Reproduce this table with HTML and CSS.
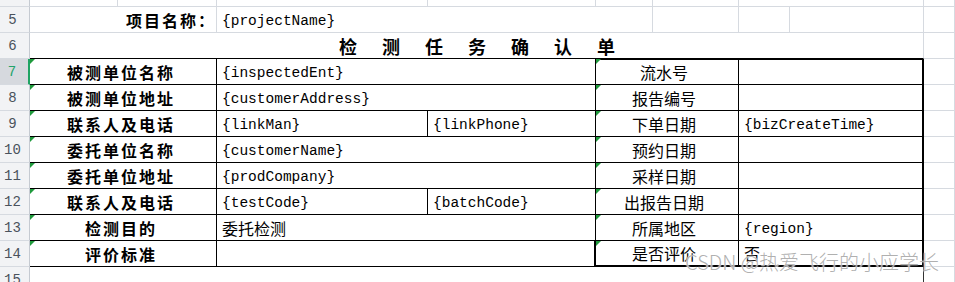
FILE: index.html
```html
<!DOCTYPE html>
<html lang="zh">
<head>
<meta charset="utf-8">
<title>检测任务确认单</title>
<link rel="stylesheet" href="styles.css">
</head>
<body>
<div class="sheet">
  <!-- row 4 -->
  <div class="hd">4</div>
  <div class="c"></div><div class="c"></div><div class="c"></div><div class="c"></div><div class="c"></div><div class="c"></div>
  <div class="c s2"></div><div class="c"></div>
  <!-- row 5 -->
  <div class="hd">5</div>
  <div class="c s2 lb right">项目名称：</div>
  <div class="c s3 v">{projectName}</div>
  <div class="c"></div><div class="c"></div><div class="c"></div><div class="c"></div>
  <!-- row 6 -->
  <div class="hd">6</div>
  <div class="c s8 title">检测任务确认单</div>
  <div class="c"></div>
  <!-- row 7 -->
  <div class="hd sel">7</div>
  <div class="c s2 t lb w">被测单位名称</div>
  <div class="c s2 t v">{inspectedEnt}</div>
  <div class="c s2 t rl w top">流水号</div>
  <div class="c s2 t v rt top"></div>
  <div class="c"></div>
  <!-- row 8 -->
  <div class="hd">8</div>
  <div class="c s2 t lb w">被测单位地址</div>
  <div class="c s2 t v">{customerAddress}</div>
  <div class="c s2 t rl w">报告编号</div>
  <div class="c s2 t v rt"></div>
  <div class="c"></div>
  <!-- row 9 -->
  <div class="hd">9</div>
  <div class="c s2 t lb w">联系人及电话</div>
  <div class="c t v">{linkMan}</div>
  <div class="c t v">{linkPhone}</div>
  <div class="c s2 t rl w">下单日期</div>
  <div class="c s2 t v rt">{bizCreateTime}</div>
  <div class="c"></div>
  <!-- row 10 -->
  <div class="hd">10</div>
  <div class="c s2 t lb w">委托单位名称</div>
  <div class="c s2 t v">{customerName}</div>
  <div class="c s2 t rl w">预约日期</div>
  <div class="c s2 t v rt"></div>
  <div class="c"></div>
  <!-- row 11 -->
  <div class="hd">11</div>
  <div class="c s2 t lb w">委托单位地址</div>
  <div class="c s2 t v">{prodCompany}</div>
  <div class="c s2 t rl w">采样日期</div>
  <div class="c s2 t v rt"></div>
  <div class="c"></div>
  <!-- row 12 -->
  <div class="hd">12</div>
  <div class="c s2 t lb w">联系人及电话</div>
  <div class="c t v">{testCode}</div>
  <div class="c t v">{batchCode}</div>
  <div class="c s2 t rl w">出报告日期</div>
  <div class="c s2 t v rt"></div>
  <div class="c"></div>
  <!-- row 13 -->
  <div class="hd">13</div>
  <div class="c s2 t lb w">检测目的</div>
  <div class="c s2 t vc">委托检测</div>
  <div class="c s2 t rl w">所属地区</div>
  <div class="c s2 t v rt">{region}</div>
  <div class="c"></div>
  <!-- row 14 -->
  <div class="hd">14</div>
  <div class="c s2 t lb w">评价标准</div>
  <div class="c s2 t vc thickr"></div>
  <div class="c s2 t rl w bot">是否评价</div>
  <div class="c s2 t vc rt bot">否</div>
  <div class="c"></div>
  <!-- row 15 -->
  <div class="hd">15</div>
  <div class="c s8 last"></div>
  <div class="c"></div>
</div>
<div class="watermark">CSDN @热爱飞行的小应学长</div>
</body>
</html>
```

FILE: styles.css
```css
html, body {
  margin: 0;
  padding: 0;
  background: #ffffff;
}

body {
  position: relative;
  width: 955px;
  height: 282px;
  overflow: hidden;
  font-family: "Noto Sans CJK SC", "Noto Sans", sans-serif;
  color: #000;
}

.sheet {
  display: grid;
  grid-template-columns: 30px 88px 99px 211px 168px 57px 86px 51px 134px 31px;
  grid-auto-rows: 26px;
  margin-top: -19px;
}

.hd {
  box-sizing: border-box;
  background: #f2f3f5;
  border-right: 1px solid #c5cad1;
  border-bottom: 1px solid #d6dae0;
  color: #4a525c;
  font-family: "Liberation Mono", monospace;
  font-size: 14px;
  display: flex;
  align-items: center;
  justify-content: center;
  padding-right: 4px;
}

.hd.sel {
  background: #d6d9de;
  color: #22a36a;
  border-right: 2px solid #1fa463;
}

.c {
  box-sizing: border-box;
  position: relative;
  border-right: 1px solid #d6dae0;
  border-bottom: 1px solid #d6dae0;
  display: flex;
  align-items: center;
  white-space: nowrap;
  overflow: visible;
}

.s2 { grid-column: span 2; }
.s3 { grid-column: span 3; }
.s8 { grid-column: span 8; }

.t {
  border-right-color: #000;
  border-bottom-color: #000;
}

.title {
  border-bottom-color: #000;
  justify-content: center;
  align-items: flex-end;
  padding-bottom: 1px;
  padding-left: 26px;
  font-size: 18px;
  font-weight: 700;
  letter-spacing: 25px;
  line-height: 22px;
}

.lb {
  justify-content: center;
  font-size: 16px;
  font-weight: 700;
  letter-spacing: 2px;
  padding-right: 4px;
}

.lb.right {
  justify-content: flex-end;
  padding-right: 0;
  letter-spacing: 2px;
}

.rl {
  justify-content: center;
  font-size: 16px;
  padding-right: 6px;
}

.v {
  font-family: "Liberation Mono", monospace;
  font-size: 14.5px;
  padding-left: 5px;
  padding-top: 2px;
}

.vc {
  font-size: 16px;
  padding-left: 5px;
}

.rt {
  border-right: 2px solid #000;
}

.top {
  box-shadow: inset 0 1px 0 #000;
}

.bot {
  border-bottom: 2px solid #000;
}

.thickr {
  border-right: 2px solid #000;
}

.last {
  border-bottom-color: transparent;
  border-right-color: #333;
}

.w::before {
  content: "";
  position: absolute;
  top: 0;
  left: 0;
  width: 0;
  height: 0;
  border-top: 5px solid #1f9a3c;
  border-right: 5px solid transparent;
}

.watermark {
  position: absolute;
  right: 16px;
  bottom: 9px;
  font-family: "Noto Sans CJK SC", "Noto Sans", sans-serif;
  font-size: 20px;
  font-weight: 300;
  line-height: 22px;
  color: rgba(150, 150, 150, 0.75);
  text-shadow: 0 0 2px #ffffff, 0 0 1px #ffffff;
  white-space: nowrap;
}
```
